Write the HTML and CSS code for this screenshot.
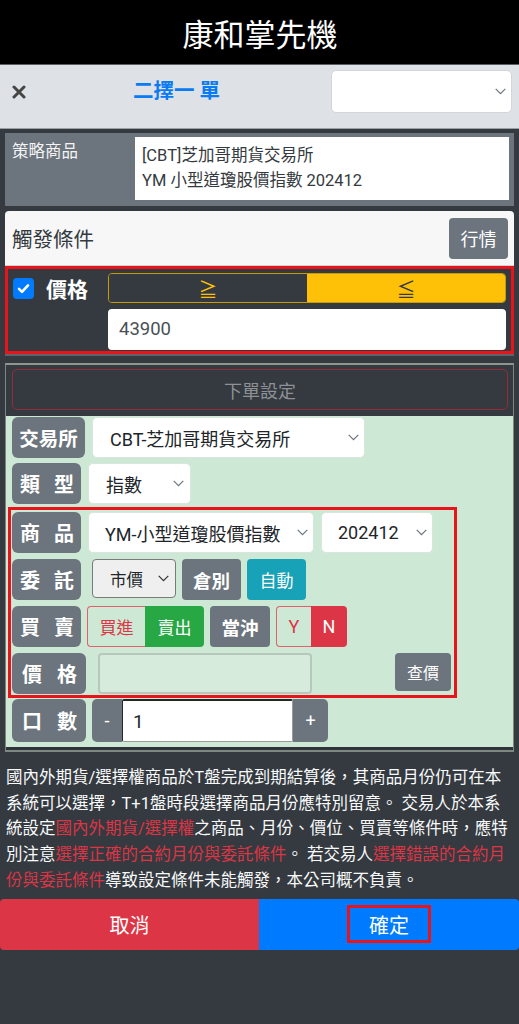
FILE: index.html
```html
<!DOCTYPE html>
<html lang="zh-Hant">
<head>
<meta charset="utf-8">
<title>康和掌先機</title>
<link rel="stylesheet" href="styles.css">
</head>
<body>
<header class="appbar">康和掌先機</header>
<div class="toolbar">
  <span class="close"><svg width="14" height="14" viewBox="0 0 14 14"><path d="M2 2L12 12M12 2L2 12" stroke="#454545" stroke-width="3" stroke-linecap="round"/></svg></span>
  <span class="tb-title">二擇一 單</span>
  <div class="select tb-select"><span></span><svg class="chev" width="11" height="7" viewBox="0 0 11 7"><path d="M0.7 0.8L5.5 5.6L10.3 0.8" fill="none" stroke="#6c757d" stroke-width="1.2"/></svg></div>
</div>
<main class="content">
  <section class="strategy">
    <div class="strategy-label">策略商品</div>
    <div class="strategy-box">[CBT]芝加哥期貨交易所<br>YM 小型道瓊股價指數 202412</div>
  </section>

  <section class="trigger">
    <div class="trigger-head">
      <span class="trigger-title">觸發條件</span>
      <span class="btn btn-gray quote">行情</span>
    </div>
    <div class="trigger-body">
      <div class="trig-left">
        <span class="check"><svg width="21" height="21" viewBox="0 0 21 21"><path d="M6 10.8L9 13.8L15 7.4" fill="none" stroke="#fff" stroke-width="2.6" stroke-linecap="round" stroke-linejoin="round"/></svg></span>
        <span class="trig-label">價格</span>
      </div>
      <div class="trig-right">
        <div class="toggle"><span class="tg tg-off">≧</span><span class="tg tg-on">≦</span></div>
        <div class="price-input">43900</div>
      </div>
    </div>
  </section>

  <section class="order">
    <div class="order-head"><div class="order-btn">下單設定</div></div>
    <div class="order-body">
      <div class="row r1">
        <span class="lbl lbl3">交易所</span>
        <div class="select sel-ex"><span>CBT-芝加哥期貨交易所</span><svg class="chev" width="11" height="7" viewBox="0 0 11 7"><path d="M0.7 0.8L5.5 5.6L10.3 0.8" fill="none" stroke="#6c757d" stroke-width="1.2"/></svg></div>
      </div>
      <div class="row r2">
        <span class="lbl lbl2"><span>類</span><span>型</span></span>
        <div class="select sel-type"><span>指數</span><svg class="chev" width="11" height="7" viewBox="0 0 11 7"><path d="M0.7 0.8L5.5 5.6L10.3 0.8" fill="none" stroke="#6c757d" stroke-width="1.2"/></svg></div>
      </div>
      <div class="hl-box">
        <div class="row">
          <span class="lbl lbl2"><span>商</span><span>品</span></span>
          <div class="select sel-prod"><span>YM-小型道瓊股價指數</span><svg class="chev" width="11" height="7" viewBox="0 0 11 7"><path d="M0.7 0.8L5.5 5.6L10.3 0.8" fill="none" stroke="#6c757d" stroke-width="1.2"/></svg></div>
          <div class="select sel-month"><span>202412</span><svg class="chev" width="11" height="7" viewBox="0 0 11 7"><path d="M0.7 0.8L5.5 5.6L10.3 0.8" fill="none" stroke="#6c757d" stroke-width="1.2"/></svg></div>
        </div>
        <div class="row">
          <span class="lbl lbl2"><span>委</span><span>託</span></span>
          <div class="select sel-mkt"><span>市價</span><svg class="chev" width="11" height="7" viewBox="0 0 11 7"><path d="M0.7 0.8L5.5 5.6L10.3 0.8" fill="none" stroke="#333" stroke-width="1.2"/></svg></div>
          <span class="btn btn-gray bold w59 ml6">倉別</span>
          <span class="btn btn-teal w59 ml6">自動</span>
        </div>
        <div class="row">
          <span class="lbl lbl2"><span>買</span><span>賣</span></span>
          <div class="group ml6">
            <span class="seg seg-out buy">買進</span><span class="seg seg-green sell">賣出</span>
          </div>
          <span class="btn btn-gray bold w60 ml6">當沖</span>
          <div class="group ml6">
            <span class="seg seg-out yn-y">Y</span><span class="seg seg-red yn-n">N</span>
          </div>
        </div>
        <div class="row">
          <span class="lbl lbl2w"><span>價</span><span>格</span></span>
          <div class="limit-input"></div>
          <span class="btn btn-gray query">查價</span>
        </div>
      </div>
      <div class="row r7">
        <span class="lbl lbl2w"><span>口</span><span>數</span></span>
        <div class="qty ml6">
          <span class="qty-btn minus">-</span>
          <span class="qty-input">1</span>
          <span class="qty-btn plus">+</span>
        </div>
      </div>
    </div>
  </section>

  <p class="notice">國內外期貨/選擇權商品於T盤完成到期結算後，其商品月份仍可在本系統可以選擇，T+1盤時段選擇商品月份應特別留意。 交易人於本系統設定<span class="warn">國內外期貨/選擇權</span>之商品、月份、價位、買賣等條件時，應特別注意<span class="warn">選擇正確的合約月份與委託條件</span>。 若交易人<span class="warn">選擇錯誤的合約月</span><span class="warn">份與委託條件</span>導致設定條件未能觸發，本公司概不負責。</p>
</main>
<footer class="actions">
  <span class="act cancel">取消</span>
  <span class="act confirm"><span class="confirm-box">確定</span></span>
</footer>
</body>
</html>
```

FILE: styles.css
```css
* { box-sizing: border-box; }
html, body { margin: 0; padding: 0; }
body {
  width: 519px;
  min-height: 1024px;
  background: #343a40;
  font-family: Roboto, "Noto Sans CJK TC", sans-serif;
  color: #212529;
}

.appbar {
  height: 64px;
  background: #000;
  color: #fff;
  font-size: 31px;
  display: flex;
  align-items: center;
  justify-content: center;
  padding-left: 1px;
}

.select {
  background: #fff;
  display: flex;
  align-items: center;
  padding: 0 5px 0 16px;
  border-radius: 5px;
  font-size: 18px;
  color: #212529;
  border: 1px solid #d9e6dd;
  height: 100%;
  white-space: nowrap;
}
.select .chev { margin-left: auto; flex: none; }

.toolbar {
  height: 65px;
  background: #dee2e6;
  border-top: 1px solid #5a5f64;
  border-bottom: 1px solid #9aa0a6;
  display: flex;
  align-items: flex-start;
  padding: 5px 7px 0 12px;
}
.close { width: 14px; height: 43px; display: flex; align-items: center; }
.tb-title {
  margin-left: 107px;
  line-height: 43px;
  font-size: 20.5px;
  font-weight: bold;
  color: #0a7bf1;
}
.toolbar .tb-select { margin-left: auto; width: 181px; height: 43px; border-radius: 5px; border: 1px solid #d2d6da; }

.content { padding: 0 5px; }

.strategy {
  margin-top: 4px;
  height: 73px;
  background: #6c757d;
  display: flex;
  padding: 4px 5px 6px 7px;
}
.strategy-label {
  width: 123px;
  color: #f4f4f4;
  font-size: 16.5px;
  line-height: 25px;
  padding-top: 2px;
}
.strategy-box {
  flex: 1;
  background: #fff;
  font-size: 16.5px;
  line-height: 25px;
  color: #343a40;
  padding: 6px 7px;
}

.trigger { margin-top: 5px; border-bottom: 2px solid #5c6369; }
.trigger-head {
  height: 55px;
  background: #f7f7f7;
  border-radius: 4px 4px 0 0;
  border-bottom: 1px solid #d3d3d3;
  display: flex;
  align-items: center;
  padding: 0 6px 0 7px;
}
.trigger-title { font-size: 20.5px; color: #343a40; }
.btn {
  display: inline-flex;
  align-items: center;
  justify-content: center;
  border-radius: 4px;
  color: #fff;
  font-size: 17px;
  height: 41px;
  flex: none;
  white-space: nowrap;
}
.btn-gray { background: #6c757d; }
.btn-teal { background: #17a2b8; }
.bold { font-weight: bold; font-size: 18.5px; }
.quote { margin-left: auto; width: 59px; font-size: 18px; }

.trigger-body {
  height: 88px;
  border: 3px solid #e8141c;
  background: #343a40;
  display: flex;
  padding: 4px 4px 1px 5px;
}
.trig-left { width: 95px; height: 30px; display: flex; align-items: center; }
.check { width: 21px; height: 21px; border-radius: 4px; background: #007bff; display: flex; }
.trig-label { margin-left: 12px; color: #fff; font-size: 21px; font-weight: bold; }
.trig-right { width: 398px; display: flex; flex-direction: column; gap: 6px; }
.toggle {
  height: 30px;
  border: 1px solid #c99a0c;
  border-radius: 4px;
  display: flex;
  overflow: hidden;
}
.tg { flex: 1; display: flex; align-items: center; justify-content: center; font-size: 19px; font-family: "Noto Sans CJK TC", sans-serif; }
.tg-off { background: #343a40; color: #ffc107; }
.tg-on { background: #ffc107; color: #343a40; }
.price-input {
  height: 41px;
  background: #fff;
  border-radius: 4px;
  padding: 0 11px;
  font-size: 18.5px;
  line-height: 41px;
  color: #495057;
}

.order {
  margin-top: 7px;
  border: 1px solid #7c8880;
  border-top: 2px solid #8c968f;
  border-bottom: 2px solid #7c8880;
}
.order-head { background: #343a40; padding: 4px 5px 6px 6px; }
.order-btn {
  height: 41px;
  border: 1px solid #932d37;
  border-radius: 5px;
  color: #8e9296;
  font-size: 18px;
  display: flex;
  align-items: center;
  justify-content: center;
}
.order-body {
  background: #cde9d5;
  padding: 1px 6px 5px 6px;
  border-bottom: 3px solid #2f343a;
}
.row { display: flex; height: 41px; align-items: stretch; }
.r2 { margin-top: 5px; }
.r7 { margin-top: 1px; height: 43px; }

.lbl {
  flex: none;
  background: #6c757d;
  color: #fff;
  font-size: 20px;
  font-weight: bold;
  border-radius: 6px;
  display: flex;
  align-items: center;
  justify-content: space-between;
  white-space: nowrap;
}
.lbl3 { width: 73px; padding: 0 4px; justify-content: center; font-size: 19.5px; }
.lbl2 { width: 69px; padding: 0 7px 0 8px; }
.lbl2w { width: 74px; padding: 0 9px 0 10px; }

.sel-ex { margin-left: 7px; width: 273px; padding-left: 17px; }
.sel-type { margin-left: 7px; width: 103px; padding-left: 17px; padding-right: 6px; }
.sel-prod { margin-left: 7px; width: 226px; }
.sel-month { margin-left: 7px; width: 112px; }
.sel-mkt {
  margin-left: 11px;
  width: 84px;
  height: 39px;
  background: #efefef;
  border: 1px solid #7a7a7a;
  border-radius: 4px;
  padding: 0 6px 0 17px;
  font-size: 16.5px;
}

.hl-box {
  margin-top: 3px;
  margin-left: -4px;
  width: 449px;
  border: 3px solid #e8141c;
  padding: 2px 1px 1px 1px;
  display: flex;
  flex-direction: column;
  gap: 6px;
}

.ml6 { margin-left: 6px; }
.w59 { width: 59px; }
.w60 { width: 60px; }

.group { display: flex; }
.seg {
  display: flex;
  align-items: center;
  justify-content: center;
  font-size: 17px;
}
.seg-out { border: 1px solid #e0606c; color: #dc3545; border-radius: 4px 0 0 4px; border-right: none; }
.seg-green { background: #28a745; color: #fff; border-radius: 0 4px 4px 0; }
.seg-red { background: #dc3545; color: #fff; border-radius: 0 4px 4px 0; }
.buy { width: 58px; }
.sell { width: 59px; }
.yn-y { width: 35px; font-size: 18px; }
.yn-n { width: 36px; font-size: 18px; }

.limit-input {
  margin-left: 12px;
  width: 214px;
  background: #d6ebdc;
  border: 2px solid #b7c7bb;
  border-radius: 4px;
}
.query { margin-left: 83px; width: 56px; height: 38px; font-size: 16px; }

.qty { display: flex; }
.qty-btn {
  background: #6c757d;
  color: #fff;
  display: flex;
  align-items: center;
  justify-content: center;
  font-size: 18px;
}
.minus { width: 30px; border-radius: 5px 0 0 5px; }
.plus { width: 35px; border-radius: 0 5px 5px 0; }
.qty-input {
  width: 171px;
  background: #fff;
  border-top: 2px solid #262626;
  border-left: 1px solid #262626;
  border-right: 1px solid #9a9a9a;
  border-bottom: 1px solid #9a9a9a;
  border-radius: 2px;
  font-size: 19px;
  display: flex;
  align-items: center;
  padding-left: 10px;
  color: #212529;
}

.notice {
  margin: 13px 0 5px;
  padding: 0 1px;
  font-size: 16.5px;
  line-height: 25.7px;
  color: #f8f9fa;
}
.warn { color: #dc3545; }

.actions { display: flex; height: 51px; }
.act {
  display: flex;
  align-items: center;
  justify-content: center;
  color: #fff;
  font-size: 20px;
}
.cancel { width: 259px; background: #dc3545; border-radius: 4px 0 0 4px; }
.confirm { flex: 1; background: #007bff; border-radius: 0 4px 4px 0; }
.confirm-box {
  width: 84px;
  height: 38px;
  border: 3px solid #e8141c;
  display: flex;
  align-items: center;
  justify-content: center;
}
```
